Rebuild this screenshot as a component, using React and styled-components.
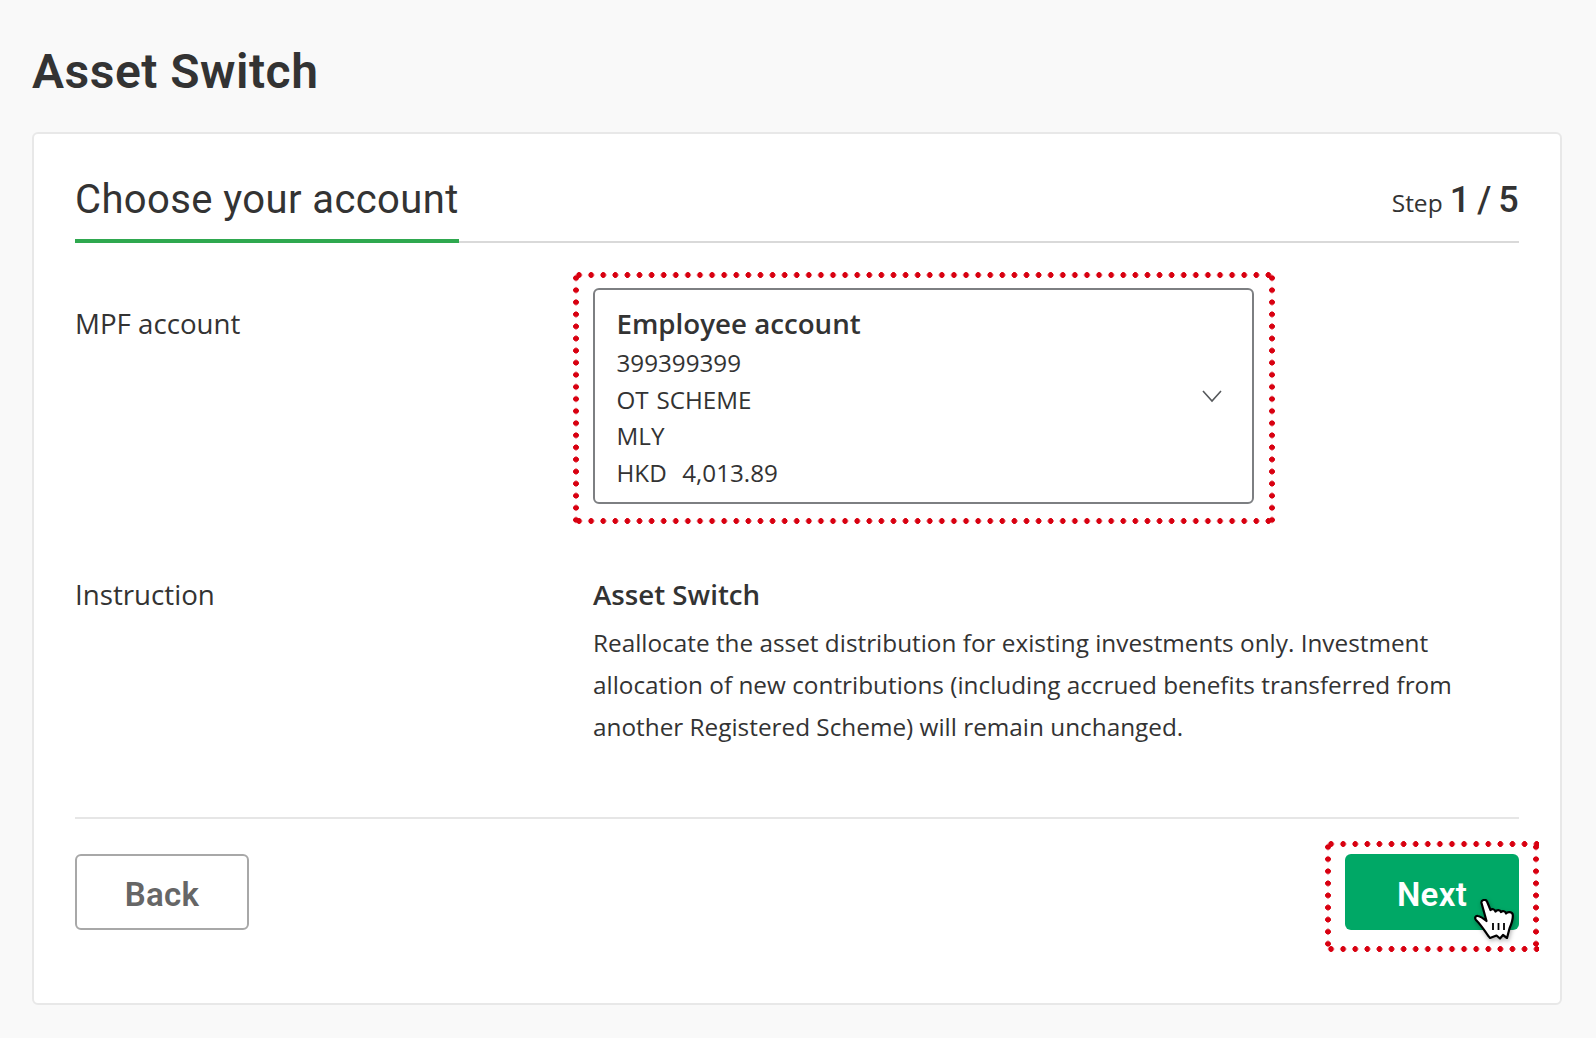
import React from "react";
import styled, { createGlobalStyle } from "styled-components";

const Global = createGlobalStyle`
  html, body { margin: 0; padding: 0; background: #f9f9f9; }
  body { font-family: "Open Sans", "Noto Sans", sans-serif; color: #333; }
`;
const Page = styled.main`
  width: 1596px; height: 1038px; box-sizing: border-box; padding: 41px 34px 0 32px; overflow: hidden;
`;
const Title = styled.h1`
  margin: 0 0 29px; font: 600 48px/62px Roboto, sans-serif; color: #333; letter-spacing: .5px;
`;
const Card = styled.section`
  box-sizing: border-box; height: 873px; background: #fff; border: 2px solid #e8e8e8; border-radius: 6px;
  padding: 36px 41px 0; display: flex; flex-direction: column;
`;
const Head = styled.header`
  display: flex; justify-content: space-between; align-items: flex-end; height: 73px;
  border-bottom: 2px solid #d9d9d9; box-sizing: border-box;
`;
const HeadTitle = styled.h2`
  margin: 0 0 -2px; height: 75px; box-sizing: border-box; border-bottom: 4px solid #2fa84f; padding-top: 4px;
  font: 400 40px/56px Roboto, sans-serif; color: #333; letter-spacing: .4px;
`;
const Step = styled.div`
  display: flex; align-items: baseline; gap: 7px; margin-bottom: 18px; font-size: 24.5px; font-weight: 500; line-height: 40px; color: #333;
`;
const StepCount = styled.span`
  font: 500 36px/40px Roboto, sans-serif; letter-spacing: .3px; word-spacing: -2.5px;
`;
const Row = styled.div`
  display: grid; grid-template-columns: 518px 1fr; margin-top: ${p => p.$top}px;
`;
const Label = styled.div`
  font-size: 27.7px; line-height: 40px; color: #333; padding-top: ${p => p.$pad || 0}px;
`;
const Highlight = styled.div`
  position: relative;
  &::after {
    content: ""; position: absolute; inset: ${p => p.$inset}; pointer-events: none;
    background:
      radial-gradient(circle, #d80010 2.6px, transparent 3.1px) 0 0 / 12.1px 6px repeat-x,
      radial-gradient(circle, #d80010 2.6px, transparent 3.1px) 0 100% / 12.1px 6px repeat-x,
      radial-gradient(circle, #d80010 2.6px, transparent 3.1px) 0 0 / 6px 12.1px repeat-y,
      radial-gradient(circle, #d80010 2.6px, transparent 3.1px) 100% 0 / 6px 12.1px repeat-y;
  }
`;
const SelectWrap = styled(Highlight)`
  width: 661px;
`;
const Select = styled.div`
  box-sizing: border-box; height: 216px; border: 2px solid #7d7f82; border-radius: 6px; padding: 13px 21px 0 21.5px;
  display: flex; justify-content: space-between; align-items: center;
`;
const Lines = styled.div`
  align-self: flex-start; display: flex; flex-direction: column;
`;
const AccountName = styled.div`
  font-size: 27.7px; font-weight: 600; line-height: 40px; margin-bottom: 2px;
`;
const AccountLine = styled.div`
  font-size: 24.2px; line-height: 36.6px; white-space: pre; word-spacing: 1.5px;
`;
const Chevron = styled.svg`
  width: 22px; height: 14px; margin-right: 8px; margin-top: -13px; fill: none; stroke: #55585b; stroke-width: 1.6;
`;
const InstrTitle = styled.div`
  font-size: 27.7px; font-weight: 600; line-height: 40px; margin-bottom: 8px;
`;
const InstrText = styled.p`
  margin: 0; width: 905px; font-size: 24.33px; line-height: 41.8px; color: #333;
`;
const Footer = styled.footer`
  margin-top: auto; height: 186px; box-sizing: border-box; border-top: 2px solid #e6e6e6; padding-top: 35px;
  display: flex; justify-content: space-between; align-items: flex-start;
`;
const Button = styled.button`
  box-sizing: border-box; width: 174px; height: 76px; border-radius: 6px; cursor: pointer; padding: 4px 0 0;
  font: 600 33px/1 Roboto, sans-serif; letter-spacing: .3px;
`;
const BackButton = styled(Button)`
  background: #fff; border: 2px solid #a8a8a8; color: #666;
`;
const NextButton = styled(Button)`
  background: #00a866; border: 0; color: #fff;
`;
const Hand = styled.svg`
  position: absolute; right: 5px; bottom: -10px; width: 40px; height: 41px; z-index: 2;
  filter: drop-shadow(1px 2px 2px rgba(0,0,0,.3));
`;

export default function App() {
  return (
    <Page>
      <Global />
      <Title>Asset Switch</Title>
      <Card>
        <Head>
          <HeadTitle>Choose your account</HeadTitle>
          <Step>Step <StepCount>1 / 5</StepCount></Step>
        </Head>
        <Row $top={45}>
          <Label $pad={15}>MPF account</Label>
          <SelectWrap $inset="-16px -21px -20px -20px">
            <Select>
              <Lines>
                <AccountName>Employee account</AccountName>
                <AccountLine>399399399</AccountLine>
                <AccountLine>OT SCHEME</AccountLine>
                <AccountLine>MLY</AccountLine>
                <AccountLine>{"HKD  4,013.89"}</AccountLine>
              </Lines>
              <Chevron viewBox="0 0 22 14"><path d="M2 2l9 10 9-10" /></Chevron>
            </Select>
          </SelectWrap>
        </Row>
        <Row $top={70}>
          <Label>Instruction</Label>
          <div>
            <InstrTitle>Asset Switch</InstrTitle>
            <InstrText>Reallocate the asset distribution for existing investments only. Investment allocation of new contributions (including accrued benefits transferred from another Registered Scheme) will remain unchanged.</InstrText>
          </div>
        </Row>
        <Footer>
          <BackButton>Back</BackButton>
          <Highlight $inset="-13px -20px -22px -20px">
            <NextButton>Next</NextButton>
            <Hand viewBox="0 0 40 41">
              <path d="M7.500 4C7 1 11.500-.5 13 2.500L16.500 11C18 9.500 20.500 10 21.500 12.500C23 10.500 26 10.500 27 13C28.500 11.500 31.500 12 32 14.500C33.500 12.500 38.500 12.500 38.800 16C39.200 21 37 26 35.500 29.500L33 39L29 36L26 39.500L22.500 36.500L16 39C13 36 9 28 2 21C.2 19 1.500 16.500 4 17C7 17.500 10 20 12.500 22Z" fill="#fff" stroke="#000" strokeWidth="2.200" strokeLinejoin="round" />
              <path d="M19 24v7M24.500 24v7M30 24v7" stroke="#000" strokeWidth="1.800" fill="none" />
            </Hand>
          </Highlight>
        </Footer>
      </Card>
    </Page>
  );
}
